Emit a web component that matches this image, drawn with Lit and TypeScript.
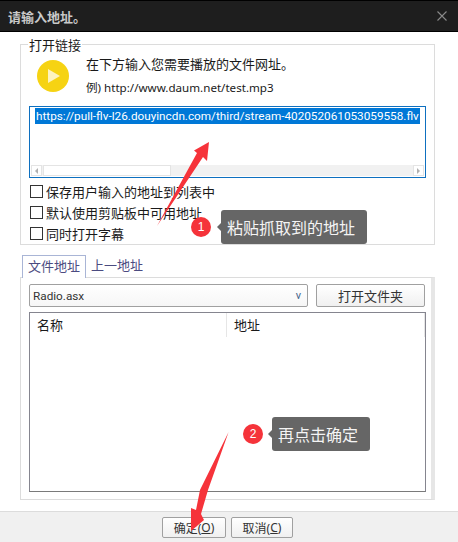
import { LitElement, html, css, svg } from "lit";
import { customElement } from "lit/decorators.js";

@customElement("app-root")
export class AppRoot extends LitElement {
  static styles = css`
    :host { display: block; width: 458px; height: 542px; overflow: hidden; position: relative; background: #fff;
      font-family: "Noto Sans CJK SC", "Liberation Sans", sans-serif; font-size: 13px; color: #1a1a1a; }
    .dialog { display: flex; flex-direction: column; height: 542px; box-sizing: border-box; }
    .title { flex: none; height: 32px; box-sizing: border-box; background: #1e1e1e; border-top: 1px solid #000; border-bottom: 1px solid #000;
      color: #c9c9c9; font-weight: 700; font-size: 13px; display: flex; align-items: center; justify-content: space-between; padding: 0 11px 0 8px; }
    .close { width: 10px; height: 10px; display: block; }
    .body { flex: 1; display: flex; flex-direction: column; padding: 12px 23px 0 20px; min-height: 0; }
    .group { flex: none; height: 201px; box-sizing: border-box; border: 1px solid #dcdcdc; position: relative; padding: 9px 8px 0 8px; display: flex; flex-direction: column; width: 415px; }
    .legend { position: absolute; left: 7px; top: -8px; background: #fff; padding: 0 1px; line-height: 16px; font-size: 13px; }
    .intro { display: flex; height: 52px; flex: none; gap: 17px; padding-left: 8px; }
    .play { width: 32px; height: 32px; margin-top: 6px; flex: none; }
    .intro-text { display: flex; flex-direction: column; gap: 5px; line-height: 19px; }
    .example { font-family: "Noto Sans", "Noto Sans CJK SC", sans-serif; font-size: 11.6px; }
    .url-box { flex: none; height: 72px; box-sizing: border-box; border: 1px solid #0e70c0; display: flex; flex-direction: column; justify-content: space-between; width: 397px; padding: 0 1px 1px; }
    .url { margin: 1px 0 0 4px; padding-left: 1px; font-family: "Roboto", "Noto Sans", sans-serif; font-size: 11.75px; line-height: 16px; white-space: nowrap; width: 384px; height: 16px; background: #0078d7; color: #fff; }
    .hscroll { height: 11px; background: #f1f1f1; display: flex; justify-content: space-between; position: relative; }
    .hscroll .btn { width: 11px; background: #fff; border: 1px solid #e4e4e4; box-sizing: border-box; display: flex; align-items: center; justify-content: center; }
    .hscroll .thumb { position: absolute; left: 12px; width: 128px; height: 11px; background: #fff; border: 1px solid #e4e4e4; box-sizing: border-box; }
    .tri-l { width: 0; height: 0; border: 3px solid transparent; border-right: 3px solid #b0b0b0; margin-left: -3px; }
    .tri-r { width: 0; height: 0; border: 3px solid transparent; border-left: 3px solid #b0b0b0; margin-right: -3px; }
    .checks { display: flex; flex-direction: column; margin: 3px 0 0 1px; }
    .check { display: flex; align-items: center; height: 21px; gap: 3px; font-size: 13px; }
    .box { width: 13px; height: 13px; box-sizing: border-box; border: 1px solid #333; background: #fff; flex: none; }
    .tabs { flex: none; display: flex; margin-top: 10px; height: 23px; padding-left: 2px; position: relative; z-index: 1; }
    .tab { padding: 0 5px; height: 22px; line-height: 20px; color: #4b4b80; box-sizing: border-box; font-size: 13px; }
    .tab.on { border: 1px solid #a9b5d6; border-bottom: none; background: #fff; height: 23px; width: 64px; text-align: center; padding: 0; }
    .panel { flex: none; height: 223px; box-sizing: border-box; width: 415px; border: 1px solid #dcdcdc; border-right: 4px solid #e6e6e6; margin-top: -1px; padding: 6px 0 0 8px; display: flex; flex-direction: column; }
    .row { display: flex; gap: 8px; height: 23px; flex: none; }
    .combo { width: 279px; box-sizing: border-box; border: 1px solid #a0a0a0; border-radius: 2px; display: flex; align-items: center; justify-content: space-between; padding: 0 3px; font-family: "Roboto", sans-serif; font-size: 11.75px; color: #333; background: linear-gradient(#fff, #f6f6f6); }
    .combo .v { color: #47678c; font-size: 11px; margin-right: 3px; }
    .push { box-sizing: border-box; border: 1px solid #a0a0a0; border-radius: 2px; background: linear-gradient(#fff, #f0f0f0); display: flex; align-items: center; justify-content: center; color: #333; }
    .open { width: 109px; font-size: 13px; }
    .list { margin-top: 5px; width: 397px; height: 180px; box-sizing: border-box; border: 1px solid #85858f; border-bottom: 1px solid #7a7a7a; display: flex; flex: none; }
    .col { height: 24px; line-height: 24px; padding-left: 7px; box-sizing: border-box; border-right: 1px solid #e6e6e6; }
    .c1 { width: 197px; }
    .c2 { flex: 1; }
    .footer { flex: none; height: 31px; box-sizing: border-box; background: #f0f0f0; border-top: 1px solid #dcdcdc; display: flex; gap: 5px; padding: 5px 0 0 162px; }
    .footer .push { height: 21px; font-size: 12px; font-family: "Noto Sans", "Noto Sans CJK SC", sans-serif; }
    .ok { width: 64px; }
    .cancel { width: 62px; }
    u { text-decoration: underline; }
    .arrows { position: absolute; inset: 0; width: 458px; height: 542px; pointer-events: none; }
    .num { position: absolute; width: 20px; height: 20px; border-radius: 50%; background: #f5333a; color: #fff; font-size: 12px; display: flex; align-items: center; justify-content: center; font-family: "Liberation Sans", sans-serif; }
    .tip { position: absolute; height: 34px; background: #666; border-radius: 3px; color: #f4f4f4; font-size: 16px; line-height: 34px; padding: 0 6px; box-sizing: border-box; white-space: nowrap; }
    .tip::before { content: ""; position: absolute; left: -4px; top: 13px; border: 4px solid transparent; border-left: none; border-right-color: #666; }
    .t1 { left: 221px; top: 210px; width: 146px; }
    .t2 { left: 272px; top: 417px; width: 98px; }
    .n1 { left: 191px; top: 217px; }
    .n2 { left: 243px; top: 424px; }
  `;

  render() {
    return html`
      <div class="dialog">
        <div class="title">
          <span>请输入地址。</span>
          <svg class="close" viewBox="0 0 10 10"><path d="M.5.5l9 9M9.5.5l-9 9" stroke="#8a8a8a" stroke-width="1.1" fill="none"/></svg>
        </div>
        <div class="body">
          <div class="group">
            <span class="legend">打开链接</span>
            <div class="intro">
              <svg class="play" viewBox="0 0 32 32"><circle cx="16" cy="16" r="16" fill="#f6d313"/><path d="M11 9v14l12-7z" fill="#fdf3c0"/></svg>
              <div class="intro-text">
                <span>在下方输入您需要播放的文件网址。</span>
                <span class="example">例) http://www.daum.net/test.mp3</span>
              </div>
            </div>
            <div class="url-box">
              <div class="url">https://pull-flv-l26.douyincdn.com/third/stream-402052061053059558.flv</div>
              <div class="hscroll"><span class="btn"><i class="tri-l"></i></span><span class="thumb"></span><span class="btn"><i class="tri-r"></i></span></div>
            </div>
            <div class="checks">
              <label class="check"><span class="box"></span>保存用户输入的地址到列表中</label>
              <label class="check"><span class="box"></span>默认使用剪贴板中可用地址</label>
              <label class="check"><span class="box"></span>同时打开字幕</label>
            </div>
          </div>
          <div class="tabs">
            <div class="tab on">文件地址</div>
            <div class="tab">上一地址</div>
          </div>
          <div class="panel">
            <div class="row">
              <div class="combo"><span>Radio.asx</span><span class="v">v</span></div>
              <div class="push open">打开文件夹</div>
            </div>
            <div class="list">
              <div class="col c1">名称</div>
              <div class="col c2">地址</div>
            </div>
          </div>
        </div>
        <div class="footer">
          <div class="push ok">确定(<u>O</u>)</div>
          <div class="push cancel">取消(<u>C</u>)</div>
        </div>
      </div>
      <svg class="arrows" viewBox="0 0 458 542">
        ${svg`<path d="M157 226L197 153L194 150.5L209 142L207 161L203 157Z" fill="#f6333a"/>
        <path d="M228.6 432L208 490L201 514L204 520L191 531L191 508L196 510L200 490Z" fill="#f6333a"/>`}
      </svg>
      <span class="num n1">1</span><div class="tip t1">粘贴抓取到的地址</div>
      <span class="num n2">2</span><div class="tip t2">再点击确定</div>
    `;
  }
}
